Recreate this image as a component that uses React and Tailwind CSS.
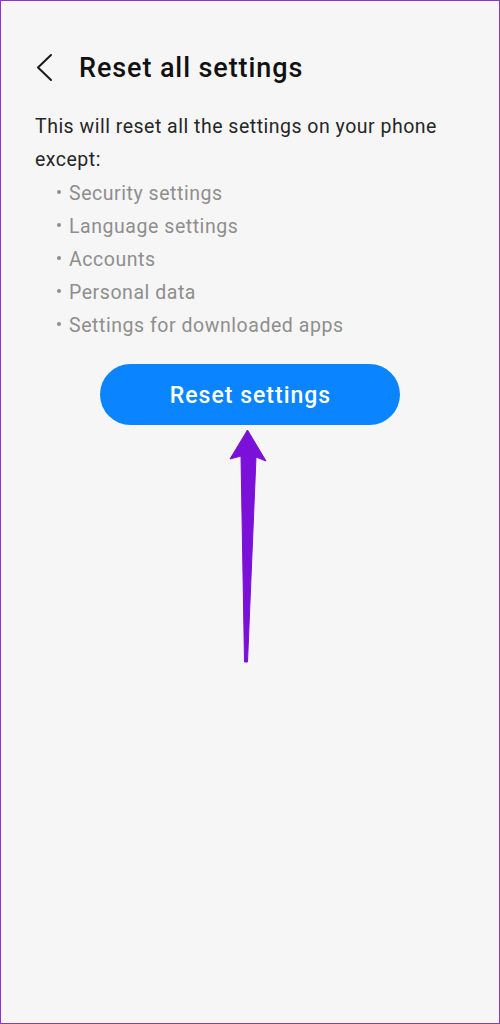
import React from "react";

export default function App() {
  const items = [
    "Security settings",
    "Language settings",
    "Accounts",
    "Personal data",
    "Settings for downloaded apps",
  ];
  return (
    <div
      className="relative w-[500px] h-[1024px] border border-[#8f35c8] bg-[#f6f6f6] overflow-hidden"
      style={{ fontFamily: "Roboto, 'Noto Sans', Arial, sans-serif" }}
    >
      <div className="flex items-center h-[32px] mt-[51px]">
        <svg width="18" height="30" viewBox="0 0 18 30" className="ml-[34px]">
          <path d="M16 2 L3 14.5 L16 27" fill="none" stroke="#1a1a1a" strokeWidth="2" strokeLinecap="round" strokeLinejoin="round" />
        </svg>
        <div className="ml-[26px] text-[27px] leading-[32px] font-medium tracking-[0.9px] text-[#111]">Reset all settings</div>
      </div>
      <div className="pl-[34px] mt-[26px] text-[19.5px] leading-[33px] tracking-[0.5px] text-[#262626]">
        <div>This will reset all the settings on your phone</div>
        <div>except:</div>
      </div>
      <div className="pl-[56px] pt-[1px] text-[19.5px] leading-[33px] tracking-[0.55px] text-[#8e8e8e]">
        {items.map((t) => (
          <div key={t} className="flex items-center">
            <span className="w-[4px] h-[4px] rounded-full bg-[#8e8e8e] mr-[8px] mt-[-3px]"></span>
            <span>{t}</span>
          </div>
        ))}
      </div>
      <div className="flex justify-center mt-[22px]">
        <button className="w-[300px] h-[61px] rounded-full bg-[#0a84ff] text-white text-[23px] font-medium tracking-[1px] pl-[1px] pt-[4px]">
          Reset settings
        </button>
      </div>
      <svg
        className="absolute left-0 top-0"
        width="500"
        height="1024"
        viewBox="0 0 500 1024"
      >
        <polygon
          points="246.5,429 229,458 240,455 243.5,661 246.5,661 255,456 265,460"
          fill="#7b10d8"
          stroke="#7b10d8"
          strokeWidth="1"
          strokeLinejoin="round"
        />
      </svg>
    </div>
  );
}
